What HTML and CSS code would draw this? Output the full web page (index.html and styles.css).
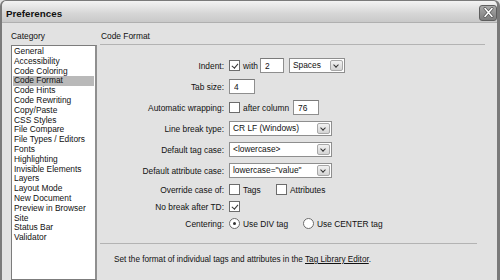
FILE: index.html
```html
<!DOCTYPE html>
<html lang="en">

<head>
    <meta charset="UTF-8">
    <title>Preferences</title>
    <link rel="stylesheet" href="styles.css">
</head>

<body>
    <div class="window">
        <!-- title bar -->
        <div class="titlebar">
            <span class="title">Preferences</span>
            <span class="close">
                <svg width="17" height="15" viewBox="0 0 17 15">
                    <path d="M5 3.5 L12 11.5 M12 3.5 L5 11.5" stroke="#555" stroke-width="3" stroke-linecap="round"/>
                    <path d="M5 3.5 L12 11.5 M12 3.5 L5 11.5" stroke="#fff" stroke-width="1.6" stroke-linecap="round"/>
                </svg>
            </span>
        </div>

        <div class="content">
            <!-- category list -->
            <div class="sidebar">
                <div class="group-label">Category</div>
                <ul class="list">
                    <li>General</li>
                    <li>Accessibility</li>
                    <li>Code Coloring</li>
                    <li class="selected">Code Format</li>
                    <li>Code Hints</li>
                    <li>Code Rewriting</li>
                    <li>Copy/Paste</li>
                    <li>CSS Styles</li>
                    <li>File Compare</li>
                    <li>File Types / Editors</li>
                    <li>Fonts</li>
                    <li>Highlighting</li>
                    <li>Invisible Elements</li>
                    <li>Layers</li>
                    <li>Layout Mode</li>
                    <li>New Document</li>
                    <li>Preview in Browser</li>
                    <li>Site</li>
                    <li>Status Bar</li>
                    <li>Validator</li>
                </ul>
            </div>

            <!-- code format panel -->
            <div class="panel">
                <div class="panel-title">Code Format</div>

                <div class="form">
                    <div class="label">Indent:</div>
                    <div class="field">
                        <span class="check on"></span>
                        <span class="opt">with</span>
                        <input class="text w-indent" type="text" value="2">
                        <div class="select w-spaces"><span class="val">Spaces</span><span class="arrow"></span></div>
                    </div>

                    <div class="label">Tab size:</div>
                    <div class="field">
                        <input class="text w-tab" type="text" value="4">
                    </div>

                    <div class="label">Automatic wrapping:</div>
                    <div class="field">
                        <span class="check"></span>
                        <span class="opt">after column</span>
                        <input class="text w-col" type="text" value="76">
                    </div>

                    <div class="label">Line break type:</div>
                    <div class="field">
                        <div class="select w-wide"><span class="val">CR LF (Windows)</span><span class="arrow"></span></div>
                    </div>

                    <div class="label">Default tag case:</div>
                    <div class="field">
                        <div class="select w-wide"><span class="val">&lt;lowercase&gt;</span><span class="arrow"></span></div>
                    </div>

                    <div class="label">Default attribute case:</div>
                    <div class="field">
                        <div class="select w-wide"><span class="val">lowercase="value"</span><span class="arrow"></span></div>
                    </div>

                    <div class="label short">Override case of:</div>
                    <div class="field short">
                        <span class="check"></span>
                        <span class="opt w-tags">Tags</span>
                        <span class="check"></span>
                        <span class="opt">Attributes</span>
                    </div>

                    <div class="label short">No break after TD:</div>
                    <div class="field short">
                        <span class="check on"></span>
                    </div>

                    <div class="label short">Centering:</div>
                    <div class="field short">
                        <span class="radio on"></span>
                        <span class="opt w-div">Use DIV tag</span>
                        <span class="radio"></span>
                        <span class="opt">Use CENTER tag</span>
                    </div>
                </div>

                <div class="hint">
                    Set the format of individual tags and attributes in the <span class="link">Tag Library Editor</span>.
                </div>
            </div>
        </div>
    </div>
</body>

</html>
```

FILE: styles.css
```css
/* page */
body {
    margin: 0;
    width: 500px;
    height: 280px;
    overflow: hidden;
    background: #e2e2e2;
    font-family: "Liberation Sans", Arial, sans-serif;
    font-size: 8.4px;
    color: #111;
}

/* window frame */
.window {
    height: 280px;
    box-sizing: border-box;
    border: 1px solid #7a7a7a;
    border-left-width: 2px;
    border-right-width: 3px;
    border-bottom: none;
    border-radius: 6px 6px 0 0;
    background: #e2e2e2;
    display: flex;
    flex-direction: column;
}

/* title bar */
.titlebar {
    height: 21px;
    flex: none;
    display: flex;
    align-items: center;
    justify-content: space-between;
    padding: 0 0 0 4px;
    background: linear-gradient(#f3f3f3, #d6d6d6 60%, #c9c9c9);
    border-bottom: 1px solid #b0b0b0;
    border-radius: 5px 5px 0 0;
}

.title {
    font-size: 9.8px;
    font-weight: bold;
    color: #111;
    padding-top: 3px;
}

.close {
    width: 18px;
    height: 16px;
    margin-top: 2px;
    border: 1px solid #5e5e5e;
    border-radius: 3px;
    background: linear-gradient(#a9a9a9, #7d7d7d);
    box-sizing: border-box;
    display: flex;
    align-items: center;
    justify-content: center;
}

.close svg {
    flex: none;
}

/* main area */
.content {
    flex: 1;
    display: flex;
    min-height: 0;
}

.sidebar {
    width: 86px;
    padding-left: 9px;
    display: flex;
    flex-direction: column;
}

.group-label,
.panel-title {
    padding-top: 8px;
    line-height: 10px;
    height: 10px;
}

.group-label {
    margin-bottom: 4px;
}

.list {
    flex: 1;
    margin: 0;
    padding: 1px 1px;
    list-style: none;
    background: #fff;
    border: 1px solid #7c7c7c;
    border-right: 2px solid #8f8f8f;
}

.list li {
    height: 9.8px;
    line-height: 9.8px;
    padding-left: 1px;
    white-space: nowrap;
}

.list .selected {
    background: #b9b9b9;
}

/* right panel */
.panel {
    flex: 1;
    padding: 0 12px 0 3px;
}

.panel-title {
    padding-left: 1px;
    padding-bottom: 3px;
    border-bottom: 1px solid #b3b3b3;
}

.form {
    margin-top: 10px;
    display: grid;
    grid-template-columns: 124px auto;
    grid-template-rows: repeat(6, 21px) repeat(3, 17px);
    column-gap: 5px;
}

.label {
    text-align: right;
    align-self: center;
    white-space: nowrap;
}

.field {
    display: flex;
    align-items: center;
}

/* controls */
.text {
    height: 15px;
    box-sizing: border-box;
    border: 1px solid #8e8e8e;
    border-top-color: #7a7a7a;
    background: #fff;
    padding: 0 0 0 4px;
    font: inherit;
    color: #111;
    outline: none;
}

.w-indent {
    width: 24px;
    margin-left: 2px;
}

.w-tab {
    width: 26px;
}

.w-col {
    width: 26px;
    margin-left: 4px;
}

.select {
    height: 15px;
    box-sizing: border-box;
    border: 1px solid #8e8e8e;
    background: #fff;
    display: flex;
    align-items: stretch;
}

.select .val {
    flex: 1;
    padding-left: 3px;
    line-height: 13px;
    white-space: nowrap;
    overflow: hidden;
}

.select .arrow {
    width: 11px;
    margin: 1px;
    border: 1px solid #a8a8a8;
    border-radius: 2px;
    background: linear-gradient(#f2f2f2, #d4d4d4);
    position: relative;
}

.select .arrow::after {
    content: "";
    position: absolute;
    left: 3px;
    top: 2px;
    width: 3px;
    height: 3px;
    border-right: 1.5px solid #333;
    border-bottom: 1.5px solid #333;
    transform: rotate(45deg);
}

.w-spaces {
    width: 56px;
    margin-left: 5px;
}

.w-wide {
    width: 103px;
}

.check {
    width: 9px;
    height: 9px;
    border: 1px solid #6c6c6c;
    background: #fff;
    position: relative;
    flex: none;
}

.check.on::after {
    content: "";
    position: absolute;
    left: 2.5px;
    top: 0.5px;
    width: 2.5px;
    height: 5px;
    border-right: 1.3px solid #333;
    border-bottom: 1.3px solid #333;
    transform: rotate(40deg);
}

.radio {
    width: 11px;
    height: 11px;
    box-sizing: border-box;
    border: 1px solid #6c6c6c;
    border-radius: 50%;
    background: #fff;
    position: relative;
    flex: none;
}

.radio.on::after {
    content: "";
    position: absolute;
    left: 3px;
    top: 3px;
    width: 3px;
    height: 3px;
    border-radius: 50%;
    background: #333;
}

.opt {
    margin-left: 3px;
    white-space: nowrap;
}

.w-tags {
    width: 33px;
}

.w-div {
    width: 60px;
}

/* bottom note */
.hint {
    margin: 11px 8px 0 0;
    padding: 11px 0 0 14px;
    border-top: 1px solid #b3b3b3;
    line-height: 10px;
    white-space: nowrap;
    font-size: 8.2px;
}

.link {
    text-decoration: underline;
}
```
